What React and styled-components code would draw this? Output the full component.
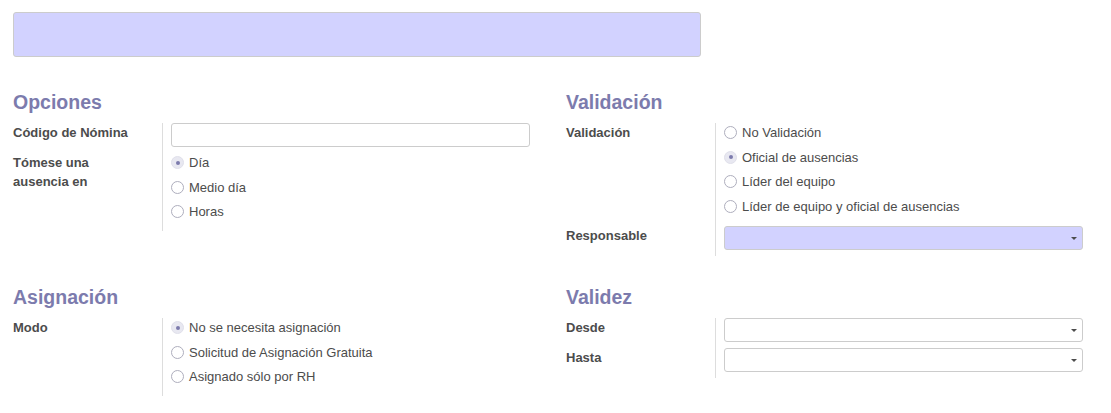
import React from 'react';
import styled, { createGlobalStyle } from 'styled-components';

const GlobalStyle = createGlobalStyle`
  html, body {
    margin: 0;
    padding: 0;
    background: #ffffff;
  }
  body {
    font-family: "Liberation Sans", Arial, sans-serif;
    font-size: 13px;
    color: #4c4c4c;
  }
`;

// Styled components.
const Page = styled.div`
  padding: 12px 0 0 13px;
`;

const TitleBar = styled.div`
  width: 688px;
  height: 45px;
  box-sizing: border-box;
  border: 1px solid #cccccc;
  border-radius: 3px;
  background: #d2d2ff;
`;

const Groups = styled.div`
  display: grid;
  grid-template-columns: 517px 517px;
  column-gap: 36px;
  row-gap: 30px;
  margin-top: 34px;
`;

const Heading = styled.h2`
  margin: 0 0 10px;
  font-size: 19.5px;
  line-height: 22px;
  font-weight: bold;
  color: #7c7bad;
`;

const Body = styled.div`
  display: grid;
  grid-template-columns: 149px 1fr;
`;

const Label = styled.div`
  font-weight: bold;
  line-height: 19px;
  color: #4c4c4c;
  padding-right: 20px;
`;

const Field = styled.div`
  border-left: 1px solid #dddddd;
  padding-left: 8px;
`;

const Input = styled.div`
  position: relative;
  height: 24px;
  box-sizing: border-box;
  margin-bottom: 6px;
  border: 1px solid #cccccc;
  border-radius: 3px;
  background: ${(p) => (p.$required ? '#d2d2ff' : '#ffffff')};
`;

const Caret = styled.span`
  position: absolute;
  right: 5px;
  top: 10px;
  width: 0;
  height: 0;
  border-left: 3px solid transparent;
  border-right: 3px solid transparent;
  border-top: 3px solid #4c4c4c;
`;

const RadioGroup = styled.div`
  padding-bottom: 4.3px;
`;

const RadioItem = styled.div`
  display: flex;
  align-items: center;
  gap: 5px;
  height: 19px;
  margin-bottom: 5.7px;
  line-height: 19px;
  color: #4c4c4c;
`;

const Circle = styled.span`
  position: relative;
  width: 13px;
  height: 13px;
  box-sizing: border-box;
  border-radius: 50%;
  flex: none;
  border: 1px solid ${(p) => (p.$checked ? '#e0e0ea' : '#aeaebd')};
  background: ${(p) => (p.$checked ? '#e8e8f1' : '#ffffff')};

  &::after {
    content: '';
    display: ${(p) => (p.$checked ? 'block' : 'none')};
    position: absolute;
    left: 3.5px;
    top: 3.5px;
    width: 4px;
    height: 4px;
    border-radius: 50%;
    background: #7c7bad;
  }
`;

const Radios = ({ options, checked }) => (
  <RadioGroup>
    {options.map((o) => (
      <RadioItem key={o}>
        <Circle $checked={o === checked} />
        {o}
      </RadioItem>
    ))}
  </RadioGroup>
);

const Select = ({ required }) => (
  <Input $required={required}>
    <Caret />
  </Input>
);

const App = () => (
  <Page>
    <GlobalStyle />
    <TitleBar />
    <Groups>
      <div>
        <Heading>Opciones</Heading>
        <Body>
          <Label>Código de Nómina</Label>
          <Field>
            <Input />
          </Field>
          <Label>Tómese una ausencia en</Label>
          <Field>
            <Radios options={['Día', 'Medio día', 'Horas']} checked="Día" />
          </Field>
        </Body>
      </div>

      <div>
        <Heading>Validación</Heading>
        <Body>
          <Label>Validación</Label>
          <Field>
            <Radios
              options={[
                'No Validación',
                'Oficial de ausencias',
                'Líder del equipo',
                'Líder de equipo y oficial de ausencias',
              ]}
              checked="Oficial de ausencias"
            />
          </Field>
          <Label>Responsable</Label>
          <Field>
            <Select required />
          </Field>
        </Body>
      </div>

      <div>
        <Heading>Asignación</Heading>
        <Body>
          <Label>Modo</Label>
          <Field>
            <Radios
              options={[
                'No se necesita asignación',
                'Solicitud de Asignación Gratuita',
                'Asignado sólo por RH',
              ]}
              checked="No se necesita asignación"
            />
          </Field>
        </Body>
      </div>

      <div>
        <Heading>Validez</Heading>
        <Body>
          <Label>Desde</Label>
          <Field>
            <Select />
          </Field>
          <Label>Hasta</Label>
          <Field>
            <Select />
          </Field>
        </Body>
      </div>
    </Groups>
  </Page>
);

export default App;
